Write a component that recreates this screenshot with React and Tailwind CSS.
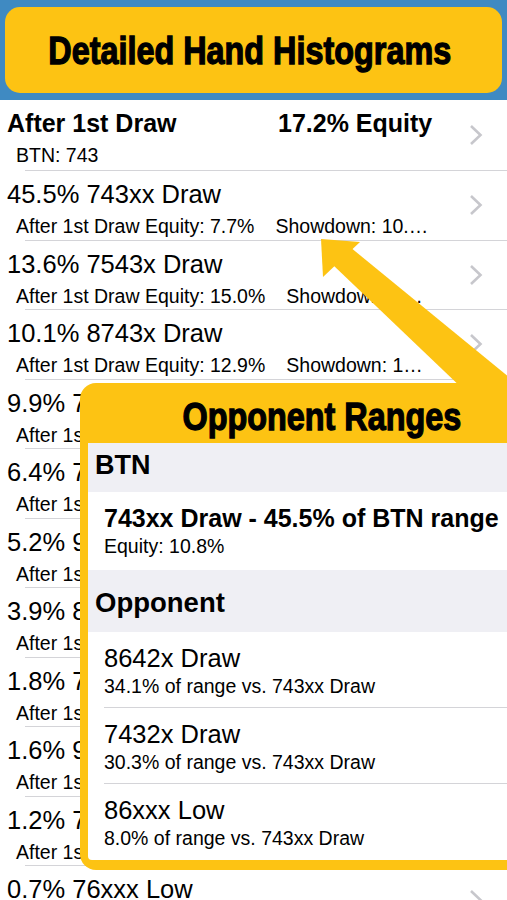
import React from "react";

const rows = [
  { title: "45.5% 743xx Draw", eq: "7.7%", sd: "Showdown: 10.…" },
  { title: "13.6% 7543x Draw", eq: "15.0%", sd: "Showdown: 1…" },
  { title: "10.1% 8743x Draw", eq: "12.9%", sd: "Showdown: 1…" },
  { title: "9.9% 7532x Draw", eq: "11.4%", sd: "Showdown: 1…" },
  { title: "6.4% 7643x Draw", eq: "10.2%", sd: "Showdown: 1…" },
  { title: "5.2% 9743x Draw", eq: "6.1%", sd: "Showdown: 8…" },
  { title: "3.9% 8643x Draw", eq: "9.8%", sd: "Showdown: 1…" },
  { title: "1.8% 7542x Draw", eq: "14.2%", sd: "Showdown: 1…" },
  { title: "1.6% 9643x Draw", eq: "5.3%", sd: "Showdown: 7…" },
  { title: "1.2% 7432x Draw", eq: "16.6%", sd: "Showdown: 1…" },
  { title: "0.7% 76xxx Low", eq: "18.0%", sd: "Showdown: 2…" },
];

const opponents = [
  { title: "8642x Draw", sub: "34.1% of range vs. 743xx Draw" },
  { title: "7432x Draw", sub: "30.3% of range vs. 743xx Draw" },
  { title: "86xxx Low", sub: "8.0% of range vs. 743xx Draw" },
];

const sans = "font-['Liberation_Sans',Arial,sans-serif]";
// Impact-like heading: squeezed bold Arial metrics with a thickened stroke
const poster =
  "inline-block whitespace-nowrap font-['Liberation_Sans',Arial,sans-serif] font-bold text-[39px] leading-none scale-x-[0.83] [-webkit-text-stroke:1.3px_black]";

const Chevron = () => (
  <svg width="14" height="22" viewBox="0 0 14 22" className="absolute right-[24px] top-1/2 -translate-y-1/2">
    <polyline points="2,2 11.5,11 2,20" fill="none" stroke="#c7c7cc" strokeWidth="2.6" />
  </svg>
);

const Separator = ({ inset = "ml-[25px]" }) => <div className={`${inset} h-px bg-[#d4d4d8]`} />;

export default function App() {
  return (
    <div className={`relative w-[507px] h-[900px] overflow-hidden bg-white text-black ${sans}`}>
      {/* banner */}
      <div className="h-[100px] bg-[#3f8ac2] px-[5px] pt-[7px]">
        <div className="h-[86px] rounded-[15px] bg-[#fdc313] flex items-center justify-center pr-[8px]">
          <span className={poster}>Detailed Hand Histograms</span>
        </div>
      </div>

      {/* list */}
      <div className="relative h-[70px]">
        <div className="flex pl-[7px] pt-[8px] text-[25px] font-bold leading-[30px]">
          <span className="w-[271px]">After 1st Draw</span>
          <span>17.2% Equity</span>
        </div>
        <div className="mt-[5px] pl-[16px] text-[19.5px] leading-[24px]">BTN: 743</div>
        <Chevron />
      </div>
      <Separator />
      {rows.map((r) => (
        <div key={r.title}>
          <div className="relative h-[68.5px]">
            <div className="pl-[7px] pt-[8px] text-[25.5px] leading-[30px]">{r.title}</div>
            <div className="mt-[5px] flex pl-[16px] text-[19.5px] leading-[24px] whitespace-nowrap">
              <span>After 1st Draw Equity: {r.eq}</span>
              <span className="ml-[21px]">{r.sd}</span>
            </div>
            <Chevron />
          </div>
          <Separator />
        </div>
      ))}

      {/* arrow */}
      <svg className="absolute left-0 top-0" width="507" height="900" viewBox="0 0 507 900">
        <polygon points="333,265 350,247 527,392 466,392" fill="#fdc313" />
        <polygon points="321,239 323,277 360,242" fill="#fdc313" />
      </svg>

      {/* opponent ranges panel */}
      <div className="absolute left-[80px] top-[383px] w-[476px] rounded-l-[16px] bg-[#fdc313] pl-[8px] pb-[10px]">
        <div className="h-[60px] flex items-center justify-center pt-[6px]">
          <span className={poster}>Opponent Ranges</span>
        </div>
        <div className="bg-white rounded-bl-[4px] overflow-hidden">
          <div className="h-[49px] bg-[#efeff4] pl-[7px] pt-[6px] text-[27px] font-bold leading-[32px]">BTN</div>
          <div className="h-[78px] pl-[16px] pt-[11px]">
            <div className="text-[25px] font-bold leading-[30px] whitespace-nowrap">743xx Draw - 45.5% of BTN range</div>
            <div className="mt-[1px] text-[19.5px] leading-[24px]">Equity: 10.8%</div>
          </div>
          <div className="h-[62px] bg-[#efeff4] pl-[7px] pt-[17px] text-[27.5px] font-bold leading-[32px]">Opponent</div>
          {opponents.map((o, i) => (
            <div key={o.title}>
              <div className="h-[75px] pl-[16px] pt-[11px]">
                <div className="text-[25.5px] leading-[30px]">{o.title}</div>
                <div className="mt-[1px] text-[19.5px] leading-[24px]">{o.sub}</div>
              </div>
              {i < opponents.length - 1 ? <Separator inset="ml-[16px]" /> : <div className="h-px" />}
            </div>
          ))}
        </div>
      </div>
    </div>
  );
}
